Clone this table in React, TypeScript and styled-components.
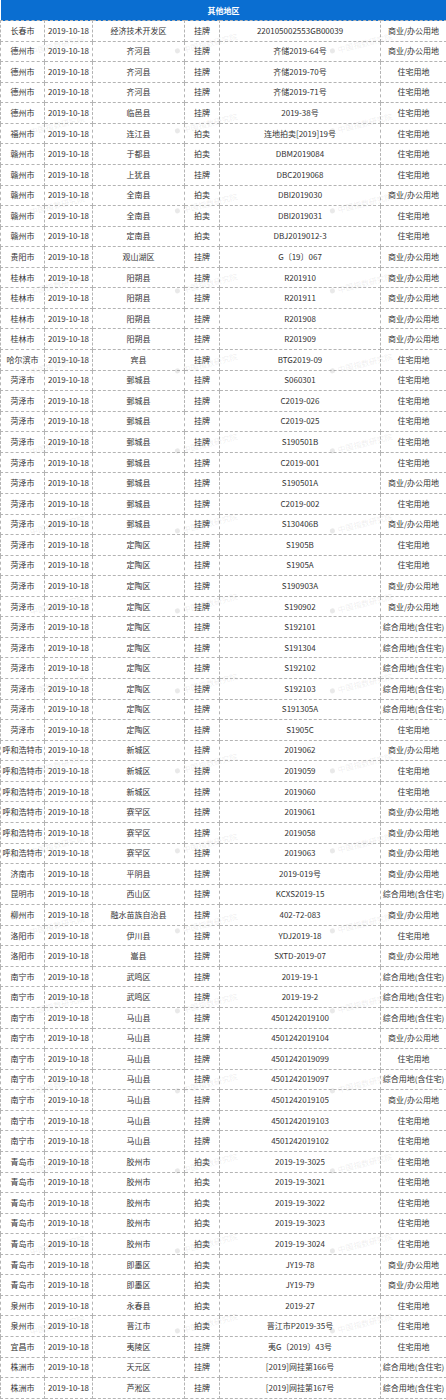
import React from "react";
import styled, { createGlobalStyle } from "styled-components";

const GlobalStyle = createGlobalStyle`
  html, body {
    margin: 0;
    padding: 0;
    background: #ffffff;
  }
  body {
    font-family: "Noto Sans CJK SC", "Noto Sans", "Liberation Sans", sans-serif;
  }
`;

const Page = styled.div`
  position: relative;
  width: 446px;
  overflow: hidden;
`;

const Table = styled.table`
  width: 446px;
  border-collapse: collapse;
  table-layout: fixed;
  font-size: 8px;
  color: #333333;
`;

const HeadCell = styled.th`
  height: 20px;
  padding: 0;
  background: #0a6ed1;
  color: #ffffff;
  font-size: 8px;
  font-weight: 700;
  text-align: center;
  border: none;
`;

const Row = styled.tr`
  height: 20.57px;
`;

const Cell = styled.td`
  padding: 0;
  border: 1px dashed #b4b4b4;
  text-align: center;
  white-space: nowrap;
  overflow: hidden;
  line-height: 1;
`;

const Watermarks = styled.div`
  position: absolute;
  inset: 0;
  pointer-events: none;
`;

const Mark = styled.div`
  position: absolute;
  display: flex;
  align-items: center;
  gap: 3px;
  color: rgba(120, 120, 120, 0.13);
  font-size: 8px;
  white-space: nowrap;
  transform: rotate(-14deg);
  transform-origin: left center;
`;

const Dot = styled.span`
  width: 5px;
  height: 5px;
  border-radius: 50%;
  background: rgba(120, 120, 120, 0.16);
`;

type Land = [string, string, string, string, string];

const HOUSE = "住宅用地";
const BIZ = "商业/办公用地";
const MIX = "综合用地(含住宅)";
const GP = "挂牌";
const PM = "拍卖";

const rows: Land[] = [
  ["长春市", "经济技术开发区", GP, "220105002553GB00039", BIZ],
  ["德州市", "齐河县", GP, "齐储2019-64号", BIZ],
  ["德州市", "齐河县", GP, "齐储2019-70号", HOUSE],
  ["德州市", "齐河县", GP, "齐储2019-71号", HOUSE],
  ["德州市", "临邑县", GP, "2019-38号", HOUSE],
  ["福州市", "连江县", PM, "连地拍卖[2019]19号", HOUSE],
  ["赣州市", "于都县", PM, "DBM2019084", HOUSE],
  ["赣州市", "上犹县", GP, "DBC2019068", HOUSE],
  ["赣州市", "全南县", PM, "DBI2019030", BIZ],
  ["赣州市", "全南县", PM, "DBI2019031", HOUSE],
  ["赣州市", "定南县", PM, "DBJ2019012-3", HOUSE],
  ["贵阳市", "观山湖区", GP, "G〔19〕067", BIZ],
  ["桂林市", "阳朔县", GP, "R201910", BIZ],
  ["桂林市", "阳朔县", GP, "R201911", BIZ],
  ["桂林市", "阳朔县", GP, "R201908", BIZ],
  ["桂林市", "阳朔县", GP, "R201909", BIZ],
  ["哈尔滨市", "宾县", GP, "BTG2019-09", HOUSE],
  ["菏泽市", "鄄城县", GP, "S060301", HOUSE],
  ["菏泽市", "鄄城县", GP, "C2019-026", HOUSE],
  ["菏泽市", "鄄城县", GP, "C2019-025", HOUSE],
  ["菏泽市", "鄄城县", GP, "S190501B", HOUSE],
  ["菏泽市", "鄄城县", GP, "C2019-001", HOUSE],
  ["菏泽市", "鄄城县", GP, "S190501A", BIZ],
  ["菏泽市", "鄄城县", GP, "C2019-002", HOUSE],
  ["菏泽市", "鄄城县", GP, "S130406B", BIZ],
  ["菏泽市", "定陶区", GP, "S1905B", HOUSE],
  ["菏泽市", "定陶区", GP, "S1905A", HOUSE],
  ["菏泽市", "定陶区", GP, "S190903A", BIZ],
  ["菏泽市", "定陶区", GP, "S190902", BIZ],
  ["菏泽市", "定陶区", GP, "S192101", MIX],
  ["菏泽市", "定陶区", GP, "S191304", MIX],
  ["菏泽市", "定陶区", GP, "S192102", MIX],
  ["菏泽市", "定陶区", GP, "S192103", MIX],
  ["菏泽市", "定陶区", GP, "S191305A", MIX],
  ["菏泽市", "定陶区", GP, "S1905C", HOUSE],
  ["呼和浩特市", "新城区", GP, "2019062", BIZ],
  ["呼和浩特市", "新城区", GP, "2019059", HOUSE],
  ["呼和浩特市", "新城区", GP, "2019060", HOUSE],
  ["呼和浩特市", "赛罕区", GP, "2019061", BIZ],
  ["呼和浩特市", "赛罕区", GP, "2019058", BIZ],
  ["呼和浩特市", "赛罕区", GP, "2019063", BIZ],
  ["济南市", "平阴县", GP, "2019-019号", BIZ],
  ["昆明市", "西山区", GP, "KCXS2019-15", MIX],
  ["柳州市", "融水苗族自治县", GP, "402-72-083", BIZ],
  ["洛阳市", "伊川县", GP, "YDJ2019-18", HOUSE],
  ["洛阳市", "嵩县", GP, "SXTD-2019-07", BIZ],
  ["南宁市", "武鸣区", GP, "2019-19-1", MIX],
  ["南宁市", "武鸣区", GP, "2019-19-2", MIX],
  ["南宁市", "马山县", GP, "4501242019100", MIX],
  ["南宁市", "马山县", GP, "4501242019104", BIZ],
  ["南宁市", "马山县", GP, "4501242019099", HOUSE],
  ["南宁市", "马山县", GP, "4501242019097", MIX],
  ["南宁市", "马山县", GP, "4501242019105", BIZ],
  ["南宁市", "马山县", GP, "4501242019103", HOUSE],
  ["南宁市", "马山县", GP, "4501242019102", HOUSE],
  ["青岛市", "胶州市", PM, "2019-19-3025", HOUSE],
  ["青岛市", "胶州市", PM, "2019-19-3021", HOUSE],
  ["青岛市", "胶州市", PM, "2019-19-3022", HOUSE],
  ["青岛市", "胶州市", PM, "2019-19-3023", HOUSE],
  ["青岛市", "胶州市", PM, "2019-19-3024", HOUSE],
  ["青岛市", "即墨区", PM, "JY19-78", BIZ],
  ["青岛市", "即墨区", PM, "JY19-79", BIZ],
  ["泉州市", "永春县", PM, "2019-27", HOUSE],
  ["泉州市", "晋江市", PM, "晋江市P2019-35号", HOUSE],
  ["宜昌市", "夷陵区", GP, "夷G〔2019〕43号", HOUSE],
  ["株洲市", "天元区", GP, "[2019]网挂第166号", MIX],
  ["株洲市", "芦淞区", GP, "[2019]网挂第167号", MIX],
];

const colWidths = [44, 48, 92, 35, 161, 66];

// watermark stamps repeat down the page in bands of three
const markBands = Array.from({ length: 17 }, (_, i) => 46 + i * 80);
const markCols = [30, 175, 330];

export default function App() {
  return (
    <Page>
      <GlobalStyle />
      <Table>
        <colgroup>
          {colWidths.map((w, i) => (
            <col key={i} style={{ width: w }} />
          ))}
        </colgroup>
        <thead>
          <tr>
            <HeadCell colSpan={6}>其他地区</HeadCell>
          </tr>
        </thead>
        <tbody>
          {rows.map((r, i) => (
            <Row key={i}>
              <Cell>{r[0]}</Cell>
              <Cell>2019-10-18</Cell>
              <Cell>{r[1]}</Cell>
              <Cell>{r[2]}</Cell>
              <Cell>{r[3]}</Cell>
              <Cell>{r[4]}</Cell>
            </Row>
          ))}
        </tbody>
      </Table>
      <Watermarks>
        {markBands.map((y) =>
          markCols.map((x) => (
            <Mark key={`${x}-${y}`} style={{ left: x, top: y }}>
              {x > 100 && <Dot />}
              中国指数研究院
            </Mark>
          ))
        )}
      </Watermarks>
    </Page>
  );
}
